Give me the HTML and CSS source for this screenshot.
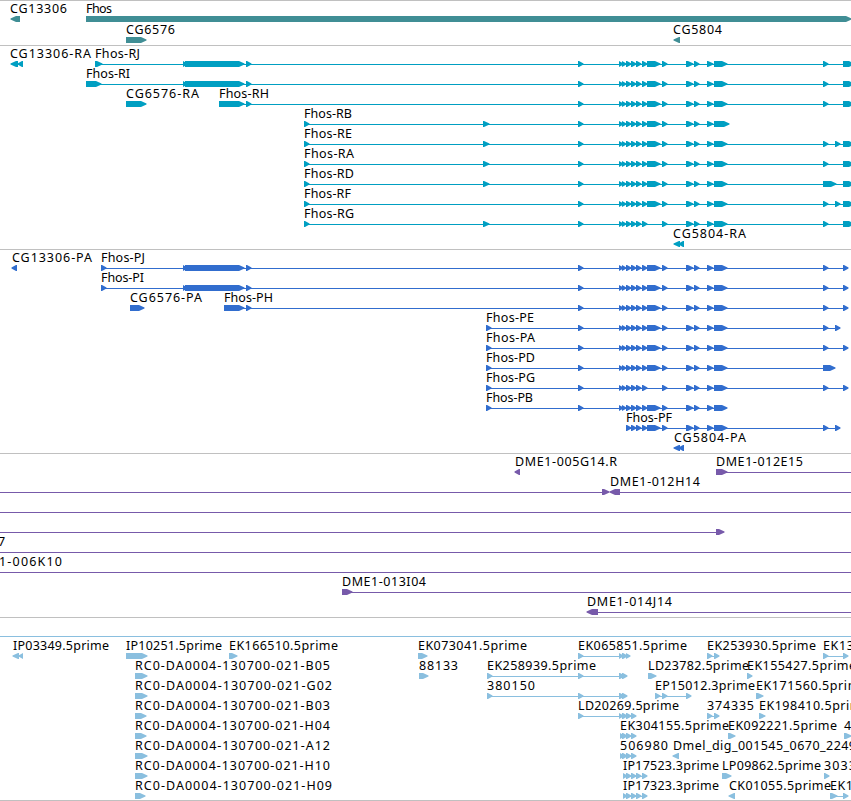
FILE: index.html
```html
<!DOCTYPE html>
<html lang="en">
<head>
    <meta charset="UTF-8">
    <meta name="viewport" content="width=device-width, initial-scale=1.0">
    <title>Genome tracks</title>
    <link rel="stylesheet" href="styles.css">
</head>
<body>
    <main class="browser">
        <section id="genes" class="track track-genes"></section>
        <section id="transcripts" class="track track-transcripts"></section>
        <section id="proteins" class="track track-proteins"></section>
        <section id="clones" class="track track-clones"></section>
        <section id="ests" class="track track-ests"></section>
    </main>
    <script src="tracks.js"></script>
</body>
</html>
```
FILE: styles.css
```css
body {
  margin: 0;
  background-color: #fff;
  overflow: hidden;
}

.browser {
  width: 100%;
  border-bottom: 1px solid #c0c0c0;
}

.track {
  border-top: 1px solid #c0c0c0;
  padding: 2px 0 1px;
}

.row {
  display: block;
  width: 100%;
  height: 20px;
  overflow: visible;
  fill: currentColor;
}

.label {
  font-family: "Noto Sans", "DejaVu Sans", sans-serif;
  font-size: 12.5px;
  fill: #000;
}

/* Track colors */
.track-genes {
  color: #408e95;
  padding-bottom: 0;
}

.track-genes .row {
  height: 21px;
}

.track-transcripts {
  color: #009fc2;
}

.track-proteins {
  color: #316dce;
}

.track-clones {
  color: #775aaa;
}

.track-ests {
  color: #8abfdf;
  padding-bottom: 0;
}
```
FILE: tracks.js
```js
const SVG = 'http://www.w3.org/2000/svg';

// label: [text, start, end], line: [start, end]
// fwd / rev: list of [start, end] blocks with an arrow head
const A = [578, 584];
const CLUSTER = [[619, 624], [622, 627], [626, 632], [631, 637], [636, 642], [642, 648]];
const BIG = [[647, 661]];
const MID = [[662, 668], [686, 694], [694, 700], [707, 714]];
const G = [714, 728];
const CORE = [A, ...CLUSTER, ...BIG, ...MID, G];
const SHORT = [A, ...CLUSTER, ...MID, G];
const BLOCK = [[183, 188], [185, 245], [246, 252]];
const X = [823, 829];
const Y = [835, 841];
const Z = [843, 855];
const ZP = [843, 849];
const END = 860;

function f(text, start, end, fwd, line) {
    return { label: [text, start, end], fwd: fwd, line: line };
}

function r(text, start, end, rev, line) {
    return { label: [text, start, end], rev: rev, line: line };
}

function rc(name, tip) {
    return f('RC0-DA0004-130700-021-' + name, 135, name === 'G02' || name === 'H09' ? 332 : 330, [[135, tip]]);
}

const tracks = {
    genes: [
        [r('CG13306', 10, 67, [[10, 20]]), f('Fhos', 86, 112, [[86, 852]])],
        [f('CG6576', 126, 175, [[126, 147]]), r('CG5804', 673, 722, [[673, 680]])]
    ],
    transcripts: [
        [r('CG13306-RA', 10, 91, [[10, 18], [17, 23]]), f('Fhos-RJ', 95, 140, [[95, 103], ...BLOCK, ...CORE, X, Z], [95, END])],
        [f('Fhos-RI', 86, 130, [[86, 102], ...BLOCK, ...CORE, X, Z], [86, END])],
        [f('CG6576-RA', 126, 199, [[126, 147]]), f('Fhos-RH', 219, 269, [[219, 245], [246, 252], ...CORE, X, Z], [219, END])],
        [f('Fhos-RB', 304, 352, [[304, 310], [483, 490], ...CORE.slice(0, -1), [714, 730]], [304, 728])],
        [f('Fhos-RE', 304, 352, [[304, 310], [483, 490], ...CORE, X, Y, Z], [304, END])],
        [f('Fhos-RA', 304, 354, [[304, 310], [483, 490], ...CORE, X, Z], [304, END])],
        [f('Fhos-RD', 304, 354, [[304, 310], [483, 490], ...CORE, [823, 837], Z], [304, END])],
        [f('Fhos-RF', 304, 351, [[304, 310], ...CORE, X, Y, Z], [304, END])],
        [f('Fhos-RG', 304, 354, [[304, 310], [483, 490], ...SHORT, X, Z], [304, END])],
        [r('CG5804-RA', 673, 746, [[673, 680], [678, 684]])]
    ],
    proteins: [
        [r('CG13306-PA', 12, 92, [[11, 17]]), f('Fhos-PJ', 101, 145, [[101, 107], ...BLOCK, ...CORE, X, ZP], [101, 845])],
        [f('Fhos-PI', 101, 144, [[101, 107], ...BLOCK, ...CORE, X, ZP], [101, 845])],
        [f('CG6576-PA', 130, 202, [[130, 145]]), f('Fhos-PH', 224, 273, [[224, 245], [246, 252], ...CORE, X, ZP], [224, 845])],
        [f('Fhos-PE', 486, 534, [[486, 492], ...CORE, X, Y], [486, 838])],
        [f('Fhos-PA', 486, 535, [[486, 492], ...CORE, X, ZP], [486, 845])],
        [f('Fhos-PD', 486, 535, [[486, 492], ...CORE, [823, 836]], [486, 832])],
        [f('Fhos-PG', 486, 535, [[486, 492], ...SHORT, X, ZP], [486, 845])],
        [f('Fhos-PB', 486, 533, [[486, 492], ...CORE], [486, 724])],
        [f('Fhos-PF', 626, 672, [...CORE.slice(3), X, Y], [626, 838])],
        [r('CG5804-PA', 674, 746, [[673, 680], [678, 684]])]
    ],
    clones: [
        [r('DME1-005G14.R', 515, 617, [[514, 520]]), f('DME1-012E15', 716, 803, [[716, 728]], [716, END])],
        [{ fwd: [[602, 610]], line: [0, 608] }, r('DME1-012H14', 610, 700, [[609, 620]], [612, END])],
        [{ line: [0, END] }],
        [{ fwd: [[716, 725]], line: [0, 718] }],
        [{ label: ['7', -2, 6], line: [0, END] }],
        [{ label: ['1-006K10', -1, 62], line: [0, END] }],
        [f('DME1-013I04', 342, 426, [[342, 353]], [342, END])],
        [r('DME1-014J14', 587, 672, [[586, 598]], [590, END])]
    ],
    ests: [
        [{ line: [0, END] }],
        [
            r('IP03349.5prime', 13, 109, [[12, 19], [18, 23]]),
            f('IP10251.5prime', 126, 222, [[126, 148]]),
            f('EK166510.5prime', 229, 338, [[229, 238]]),
            f('EK073041.5prime', 418, 527, [[418, 428]]),
            f('EK065851.5prime', 578, 687, [A, [619, 624], [622, 628], [626, 631]], [578, 628]),
            f('EK253930.5prime', 707, 816, [[707, 713], [714, 720]], [707, 716]),
            f('EK13', 823, 854, [X, ZP], [823, 845])
        ],
        [
            rc('B05', 148),
            f('88133', 419, 458, [[419, 429]]),
            f('EK258939.5prime', 487, 596, [[487, 493], A, [619, 625], [622, 628]], [487, 624]),
            f('LD23782.5prime', 648, 749, [[648, 657]]),
            f('EK155427.5prime', 747, 856, [[747, 753]])
        ],
        [
            rc('G02', 148),
            f('380150', 487, 535, [[487, 493], A, [619, 625], [622, 628]], [487, 624]),
            f('EP15012.3prime', 655, 755, [[655, 661], [662, 668], [686, 692]], [655, 688]),
            f('EK171560.5prime', 756, 867, [[756, 764]])
        ],
        [
            rc('B03', 147),
            f('LD20269.5prime', 578, 679, [A, [619, 624], [622, 628], [626, 632], [631, 637]], [578, 633]),
            f('374335', 707, 754, [[707, 713], [714, 720]], [707, 716]),
            f('EK198410.5prime', 759, 869, [[759, 766]])
        ],
        [
            rc('H04', 147),
            f('EK304155.5prime', 620, 729, [[620, 625], [622, 628], [626, 632], [631, 637]]),
            f('EK092221.5prime', 728, 837, [[728, 736]]),
            f('4', 844, 852, [[844, 852]])
        ],
        [
            rc('A12', 148),
            f('506980', 620, 668, [[620, 625], [622, 628], [626, 632], [631, 637]]),
            r('Dmel_dig_001545_0670_2249', 673, 856, [[672, 679]])
        ],
        [
            rc('H10', 148),
            f('IP17523.3prime', 623, 719, [[623, 628], [626, 632], [631, 637], [636, 642], [642, 648]], [623, 644]),
            f('LP09862.5prime', 722, 821, [[722, 732]]),
            f('3033', 824, 856, [[824, 830]])
        ],
        [
            rc('H09', 146),
            f('IP17323.3prime', 623, 719, [[623, 628], [626, 632], [631, 637], [636, 642], [642, 648]], [623, 644]),
            r('CK01055.5prime', 729, 831, [[728, 735]]),
            f('EK1', 830, 853, [[830, 838], ZP], [830, 845])
        ]
    ]
};

function add(parent, tag, attrs) {
    const el = document.createElementNS(SVG, tag);
    for (const key in attrs) {
        el.setAttribute(key, attrs[key]);
    }
    parent.appendChild(el);
    return el;
}

// Block with a pointed head, 6px high, centered on the row line
function arrowPath(from, to) {
    const size = Math.abs(to - from);
    const dir = Math.sign(to - from);
    const base = to - Math.min(size > 6 ? 6 : 5, size) * dir;
    return `M${from} 13H${base}L${to - 0.5 * dir} 15.5V16.5L${base} 19H${from}Z`;
}

function drawFeature(row, feature) {
    if (feature.line) {
        const [x1, x2] = feature.line;
        add(row, 'rect', { x: x1, y: 16, width: x2 - x1, height: 1 });
    }
    (feature.fwd || []).forEach(([a, b]) => add(row, 'path', { d: arrowPath(a, b) }));
    (feature.rev || []).forEach(([a, b]) => add(row, 'path', { d: arrowPath(b, a) }));
    if (feature.label) {
        const [text, start, end] = feature.label;
        const label = add(row, 'text', { class: 'label', x: start, y: 10, textLength: end - start });
        label.textContent = text;
    }
}

for (const id in tracks) {
    const section = document.getElementById(id);
    tracks[id].forEach(features => {
        const row = add(section, 'svg', { class: 'row' });
        features.forEach(feature => drawFeature(row, feature));
    });
}
```
